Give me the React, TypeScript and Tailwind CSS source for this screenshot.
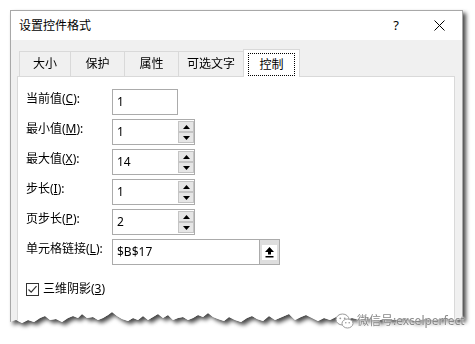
import React from "react";

function SpinBox({ value }: { value: string }) {
  return (
    <div className="flex h-[26px] w-[83px] border border-[#ababab] bg-white">
      <div className="flex flex-1 items-center pl-[4px] text-[12px] leading-none text-black">{value}</div>
      <div className="flex w-[16px] flex-col py-[1px]">
        <div className="flex h-[11px] items-center justify-center border border-[#c4c4c4] bg-[#e6e6e6]">
          <svg width="7" height="4" viewBox="0 0 7 4">
            <path d="M3.5 0L7 4H0Z" fill="#000" />
          </svg>
        </div>
        <div className="flex h-[11px] items-center justify-center border border-[#c4c4c4] bg-[#e6e6e6]">
          <svg width="7" height="4" viewBox="0 0 7 4">
            <path d="M0 0H7L3.5 4Z" fill="#000" />
          </svg>
        </div>
      </div>
    </div>
  );
}

function Row({ label, children }: { label: React.ReactNode; children: React.ReactNode }) {
  return (
    <div className="flex h-[26px]">
      <div className="w-[86px] pt-[2px] text-[12px] leading-[16px] text-black">{label}</div>
      {children}
    </div>
  );
}

export default function App() {
  return (
    <div className="relative h-[344px] w-[475px] overflow-hidden bg-white font-['Segoe_UI','Noto_Sans','Noto_Sans_CJK_SC',sans-serif]">
      <svg width="0" height="0" className="absolute">
        <defs>
          <clipPath id="torn" clipPathUnits="userSpaceOnUse">
            <polygon points="0,0 0,312 6,310 12,313 18,310 24,312 30,308 35,306 40,310 46,309 52,312 58,308 63,306 68,308 72,304 77,308 83,307 88,310 93,308 98,305 102,302 107,306 112,309 118,311 123,308 128,310 133,306 138,310 143,307 148,304 153,308 158,305 163,310 168,308 173,307 178,310 183,308 188,305 193,307 198,303 203,307 208,309 214,311 219,307 225,310 231,312 237,308 242,306 247,309 253,311 259,306 265,310 272,307 279,304 285,310 291,307 296,305 302,308 308,311 314,308 320,310 326,307 335,310 342,308 350,310 358,308 366,311 375,309 385,310 395,308 405,311 415,309 425,310 435,308 445,310 453,309 453,0" />
          </clipPath>
        </defs>
      </svg>

      <div className="ml-[10px] mt-[10px] w-[453px] [filter:drop-shadow(3px_3px_2px_rgba(0,0,0,0.72))]">
        <div className="flex h-[318px] flex-col border border-[#a8a8a8] bg-[#f0f0f0] [clip-path:url(#torn)]">
          {/* Title bar */}
          <div className="flex h-[29px] items-center bg-white pl-[8px] pr-[17px]">
            <span className="text-[12px] leading-none text-black">设置控件格式</span>
            <span className="ml-auto text-[13px] leading-none text-black">?</span>
            <svg className="ml-[35px]" width="11" height="11" viewBox="0 0 11 11">
              <path d="M0.5 0.5L10.5 10.5M10.5 0.5L0.5 10.5" stroke="#000" strokeWidth="1" />
            </svg>
          </div>

          {/* Body */}
          <div className="flex flex-1 flex-col pt-[9px]">
            <div className="flex h-[27px] items-end pl-[8px]">
              <div className="flex h-[25px] w-[51px] items-center justify-center border-l border-t border-[#d9d9d9] text-[12px] text-black">大小</div>
              <div className="flex h-[25px] w-[54px] items-center justify-center border-l border-t border-[#d9d9d9] text-[12px] text-black">保护</div>
              <div className="flex h-[25px] w-[54px] items-center justify-center border-l border-t border-[#d9d9d9] text-[12px] text-black">属性</div>
              <div className="flex h-[25px] w-[65px] items-center justify-center border-l border-t border-[#d9d9d9] text-[12px] text-black">可选文字</div>
              <div className="relative z-10 -mb-px flex h-[28px] w-[57px] flex-col border-l border-r border-t border-[#d9d9d9] bg-white px-[4px] pb-[1px] pt-[3px]">
                <div className="flex flex-1 items-center justify-center border border-dotted border-black text-[12px] text-black">控制</div>
              </div>
            </div>

            <div className="ml-[6px] mr-[7px] flex flex-1 flex-col gap-[4px] border border-[#d9d9d9] bg-white pl-[8px] pt-[12px]">
              <Row label={<>当前值(<u>C</u>):</>}>
                <div className="flex h-[26px] w-[66px] items-center border border-[#ababab] bg-white pl-[4px] text-[12px] leading-none text-black">1</div>
              </Row>
              <Row label={<>最小值(<u>M</u>):</>}>
                <SpinBox value="1" />
              </Row>
              <Row label={<>最大值(<u>X</u>):</>}>
                <SpinBox value="14" />
              </Row>
              <Row label={<>步长(<u>I</u>):</>}>
                <SpinBox value="1" />
              </Row>
              <Row label={<>页步长(<u>P</u>):</>}>
                <SpinBox value="2" />
              </Row>
              <Row label={<>单元格链接(<u>L</u>):</>}>
                <div className="flex h-[26px] w-[168px] border border-[#ababab] bg-white">
                  <div className="flex flex-1 items-center pl-[4px] text-[12px] leading-none text-black">$B$17</div>
                  <div className="flex w-[20px] items-center justify-center border-l border-[#ababab] bg-[#dedede]">
                    <div className="flex h-[15px] w-[15px] items-center justify-center bg-white">
                      <svg width="11" height="12" viewBox="0 0 11 12">
                        <path d="M5.5 1L10 6H7V8.5H4V6H1Z" fill="#000" />
                        <rect x="1.5" y="10" width="8" height="1.5" fill="#000" />
                      </svg>
                    </div>
                  </div>
                </div>
              </Row>
              <div className="mt-[12px] flex items-center">
                <div className="flex h-[13px] w-[13px] items-center justify-center border border-[#333]">
                  <svg width="11" height="11" viewBox="0 0 11 11">
                    <path d="M1.5 5.5L4.2 8.2L9.5 2.2" stroke="#333" strokeWidth="1.2" fill="none" />
                  </svg>
                </div>
                <span className="ml-[4px] text-[12px] leading-[16px] text-black">三维阴影(<u>3</u>)</span>
              </div>
            </div>
          </div>
        </div>
      </div>

      {/* watermark */}
      <div className="absolute left-[335px] top-[313px] flex items-center gap-[3px]">
        <svg width="19" height="16" viewBox="0 0 19 16">
          <ellipse cx="7.5" cy="6.5" rx="6.5" ry="5.5" fill="#fff" stroke="#9a9a9a" strokeWidth="1" />
          <circle cx="5.3" cy="5.3" r="0.9" fill="#9a9a9a" />
          <circle cx="9.7" cy="5.3" r="0.9" fill="#9a9a9a" />
          <ellipse cx="12.5" cy="10.5" rx="5.5" ry="4.5" fill="#fff" stroke="#9a9a9a" strokeWidth="1" />
          <circle cx="10.8" cy="9.8" r="0.8" fill="#9a9a9a" />
          <circle cx="14.2" cy="9.8" r="0.8" fill="#9a9a9a" />
        </svg>
        <span className="text-[12px] leading-none text-[#888] [text-shadow:0_0_2px_#fff,0_0_2px_#fff]">微信号:excelperfect</span>
      </div>
    </div>
  );
}
